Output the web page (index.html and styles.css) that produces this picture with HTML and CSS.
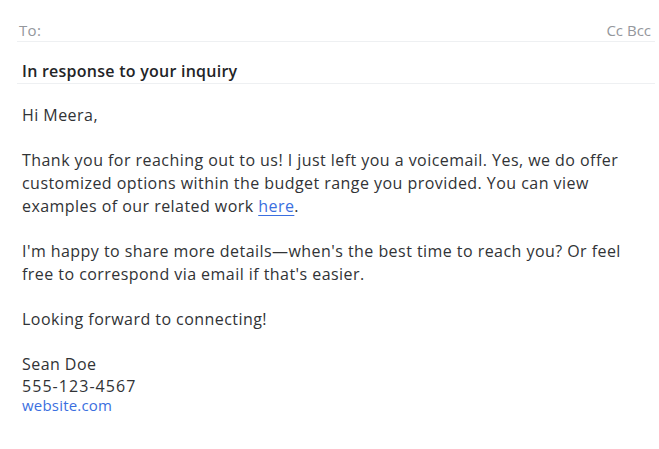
FILE: index.html
```html
<!DOCTYPE html>
<html lang="en">
<head>
<meta charset="utf-8">
<title>Compose</title>
<link rel="stylesheet" href="styles.css">
</head>
<body>
<div class="compose">
  <div class="to-row">
    <span class="to-label">To:</span>
    <span class="cc">Cc Bcc</span>
  </div>
  <div class="subject">In response to your inquiry</div>
  <div class="message">
    <p>Hi Meera,</p>
    <p>Thank you for reaching out to us! I just left you a voicemail. Yes, we do offer<br>customized options within the budget range you provided. You can view<br>examples of our related work <a href="#">here</a>.</p>
    <p>I'm happy to share more details—when's the best time to reach you? Or feel<br>free to correspond via email if that's easier.</p>
    <p>Looking forward to connecting!</p>
    <div class="sig">
      <div class="sig-name">Sean Doe</div>
      <div class="sig-phone">555-123-4567</div>
      <div class="sig-link"><a href="#">website.com</a></div>
    </div>
  </div>
</div>
</body>
</html>
```
FILE: styles.css
```css
html, body {
  margin: 0;
  padding: 0;
  background: #fff;
}
body {
  font-family: "Open Sans", "Liberation Sans", sans-serif;
  color: #313336;
}
.compose {
  padding: 0 4px 0 17px;
}
.to-row {
  display: flex;
  justify-content: space-between;
  align-items: center;
  height: 23px;
  padding: 18px 4px 0 2px;
  border-bottom: 1px solid #eef0f2;
  font-size: 15px;
  color: #94979c;
}
.to-label {
  letter-spacing: 0.3px;
}
.subject {
  padding: 18px 0 0 5px;
  line-height: 23px;
  font-size: 16px;
  font-weight: 600;
  letter-spacing: 0.25px;
  color: #232427;
  border-bottom: 1px solid #eef0f2;
}
.message {
  padding: 20px 0 0 5px;
  font-size: 16px;
  letter-spacing: 0.45px;
  line-height: 23px;
  white-space: nowrap;
}
.message p {
  margin: 0 0 22px;
}
.message a {
  color: #3b6fe0;
  text-decoration: underline;
  text-underline-offset: 3px;
}
.sig-phone {
  line-height: 21px;
  letter-spacing: 1.05px;
}
.sig-link {
  line-height: 17px;
  font-size: 15px;
  letter-spacing: 0.2px;
}
```
